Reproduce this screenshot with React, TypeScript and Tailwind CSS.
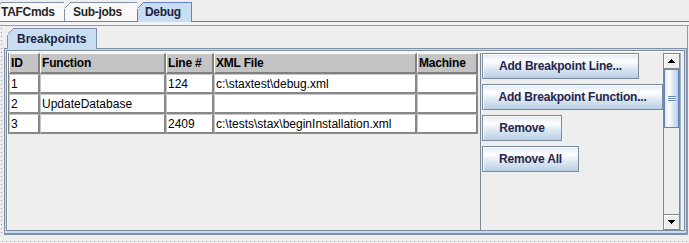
import React from 'react';

const FONT = "font-['Liberation_Sans',Arial,sans-serif]";

function Corner({ color, fill }: { color: string; fill: string }) {
  return (
    <svg className="absolute -left-px -top-px" width="7" height="7" shapeRendering="crispEdges">
      <polygon points="0,0 7,0 0,7" fill={fill} />
      <line x1="0.5" y1="6.5" x2="6.5" y2="0.5" stroke={color} strokeWidth="1" />
    </svg>
  );
}

function TopTab({ label, selected, className }: { label: string; selected?: boolean; className: string }) {
  return (
    <div
      className={`relative flex items-center border-t border-l text-[12px] font-bold leading-none tracking-[-0.3px] ${
        selected
          ? 'z-10 -mb-px h-[20px] border-r border-[#6382bf] bg-[#c8ddf2] text-[#1e1e40]'
          : 'h-[19px] border-[#8293b0] bg-[#f9f9f9] text-[#262626]'
      } ${className}`}
    >
      <Corner color={selected ? '#6382bf' : '#8293b0'} fill="#eeeeee" />
      <span className="pb-px">{label}</span>
    </div>
  );
}

function Btn({ label, w }: { label: string; w: string }) {
  return (
    <div
      className={`flex h-[26px] shrink-0 items-center justify-center border border-[#7a8a99] bg-[linear-gradient(#dde8f3,#ffffff_30%,#dde8f3_60%,#b8cfe5)] text-[12px] font-bold leading-none tracking-[-0.2px] text-[#26264a] shadow-[inset_1px_1px_0_#ffffff] ${w}`}
    >
      {label}
    </div>
  );
}

const headerCls =
  'flex h-[21px] items-center border-t border-l border-r-2 border-b-2 border-t-white border-l-white border-r-[#808080] border-b-[#808080] bg-[#c4c4c4] pl-px text-[12px] font-bold leading-none tracking-[-0.2px] text-black whitespace-nowrap overflow-hidden';
const cellCls =
  'flex h-[20px] items-center border-t border-l border-r-2 border-b-2 border-t-[#c8c8c8] border-l-[#c8c8c8] border-r-[#888888] border-b-[#888888] bg-white pl-px text-[12px] leading-none text-black whitespace-nowrap overflow-hidden';

const rows: string[][] = [
  ['1', '', '124', 'c:\\staxtest\\debug.xml', ''],
  ['2', 'UpdateDatabase', '', '', ''],
  ['3', '', '2409', 'c:\\tests\\stax\\beginInstallation.xml', ''],
];

function Arrow({ down }: { down?: boolean }) {
  return (
    <svg width="7" height="4" shapeRendering="crispEdges">
      <polygon points={down ? '0,0 7,0 3.5,4' : '3.5,0 7,4 0,4'} fill="#000000" />
    </svg>
  );
}

export default function App() {
  return (
    <div className={`${FONT} flex h-[243px] w-[689px] flex-col overflow-hidden bg-[#eeeeee] text-black`}>
      {/* top tab row */}
      <div className="flex h-[22px] shrink-0 items-end border-b border-[#6382bf]">
        <TopTab label="TAFCmds" className="-ml-[5px] w-[69px] pl-[5px]" />
        <TopTab label="Sub-jobs" className="w-[73px] pl-[8px]" />
        <TopTab label="Debug" selected className="w-[55px] pl-[7px]" />
      </div>
      <div className="h-[3px] shrink-0 bg-[#f2f4f7]" />
      <div className="h-px shrink-0 bg-[#8d9bb0]" />

      {/* main row */}
      <div className="flex h-[209px] shrink-0">
        <div className="w-[4px] shrink-0 pt-[2px]">
          <div className="ml-px h-full w-px bg-[repeating-linear-gradient(to_bottom,#8899b0_0px,#8899b0_1px,transparent_1px,transparent_4px)]" />
        </div>

        {/* inner tabbed pane */}
        <div className="flex w-[683px] shrink-0 flex-col">
          <div className="flex h-[22px] shrink-0 items-end pl-[3px]">
            <div className="relative z-10 -mb-px flex h-[21px] w-[90px] items-center border-t border-l border-r border-[#7f90ad] bg-[#c8ddf2] pl-[9px] text-[12px] font-bold leading-none text-[#1e1e40]">
              <Corner color="#7f90ad" fill="#eeeeee" />
              <span className="pb-px">Breakpoints</span>
            </div>
          </div>
          <div className="flex flex-1 flex-col border border-b-2 border-[#7f90ad] bg-[#c8ddf2] px-px pt-px pb-[2px]">
            <div className="flex flex-1 border border-[#7a8a99] bg-[#eeeeee] pt-[2px] pl-px pr-px shadow-[inset_1px_1px_0_#ffffff]">
              {/* table pane */}
              <div className="w-[472px] shrink-0">
                <div className="grid w-[470px] grid-cols-[31px_126px_48px_203px_61px] border-l border-[#808080]">
                  {['ID', 'Function', 'Line #', 'XML File', 'Machine'].map((h) => (
                    <div key={h} className={headerCls}>
                      {h}
                    </div>
                  ))}
                  {rows.map((r, i) =>
                    r.map((c, j) => (
                      <div key={`${i}-${j}`} className={cellCls}>
                        {c}
                      </div>
                    ))
                  )}
                </div>
              </div>
              <div className="w-px shrink-0 bg-[#7a8a99]" />
              {/* buttons */}
              <div className="flex w-[182px] shrink-0 flex-col items-start gap-[5px] pl-px">
                <Btn label="Add Breakpoint Line..." w="w-[157px]" />
                <Btn label="Add Breakpoint Function..." w="w-[181px]" />
                <Btn label="Remove" w="w-[80px]" />
                <Btn label="Remove All" w="w-[97px]" />
              </div>
              {/* scrollbar */}
              <div className="flex w-[17px] shrink-0 flex-col border border-[#7a8a99] bg-[#eeeeee]">
                <div className="flex h-[15px] shrink-0 items-center justify-center border-b border-[#7a8a99] bg-[#eeeeee] shadow-[inset_1px_1px_0_#ffffff]">
                  <Arrow />
                </div>
                <div className="flex h-[59px] shrink-0 flex-col items-center justify-center gap-px border border-[#6382bf] bg-[linear-gradient(to_right,#dde8f3,#ffffff_30%,#dde8f3_60%,#b8cfe5)]">
                  <div className="h-px w-[8px] bg-[#6382bf] shadow-[0_1px_0_#ffffff]" />
                  <div className="h-px w-[8px] bg-[#6382bf] shadow-[0_1px_0_#ffffff]" />
                  <div className="h-px w-[8px] bg-[#6382bf] shadow-[0_1px_0_#ffffff]" />
                </div>
                <div className="flex-1" />
                <div className="flex h-[15px] shrink-0 items-center justify-center border-t border-[#7a8a99] bg-[#eeeeee] shadow-[inset_1px_1px_0_#ffffff]">
                  <Arrow down />
                </div>
              </div>
              <div className="w-[3px] shrink-0 border-l border-[#a8b6c8]" />
            </div>
          </div>
        </div>

        <div className="w-[2px] shrink-0 border-l border-[#8d9bb0]" />
      </div>

      {/* bottom divider bumps */}
      <div className="h-[8px] shrink-0 pl-[2px]">
        <div className="mt-[6px] h-px bg-[repeating-linear-gradient(to_right,#8899b0_0px,#8899b0_1px,transparent_1px,transparent_4px)]" />
      </div>
    </div>
  );
}
